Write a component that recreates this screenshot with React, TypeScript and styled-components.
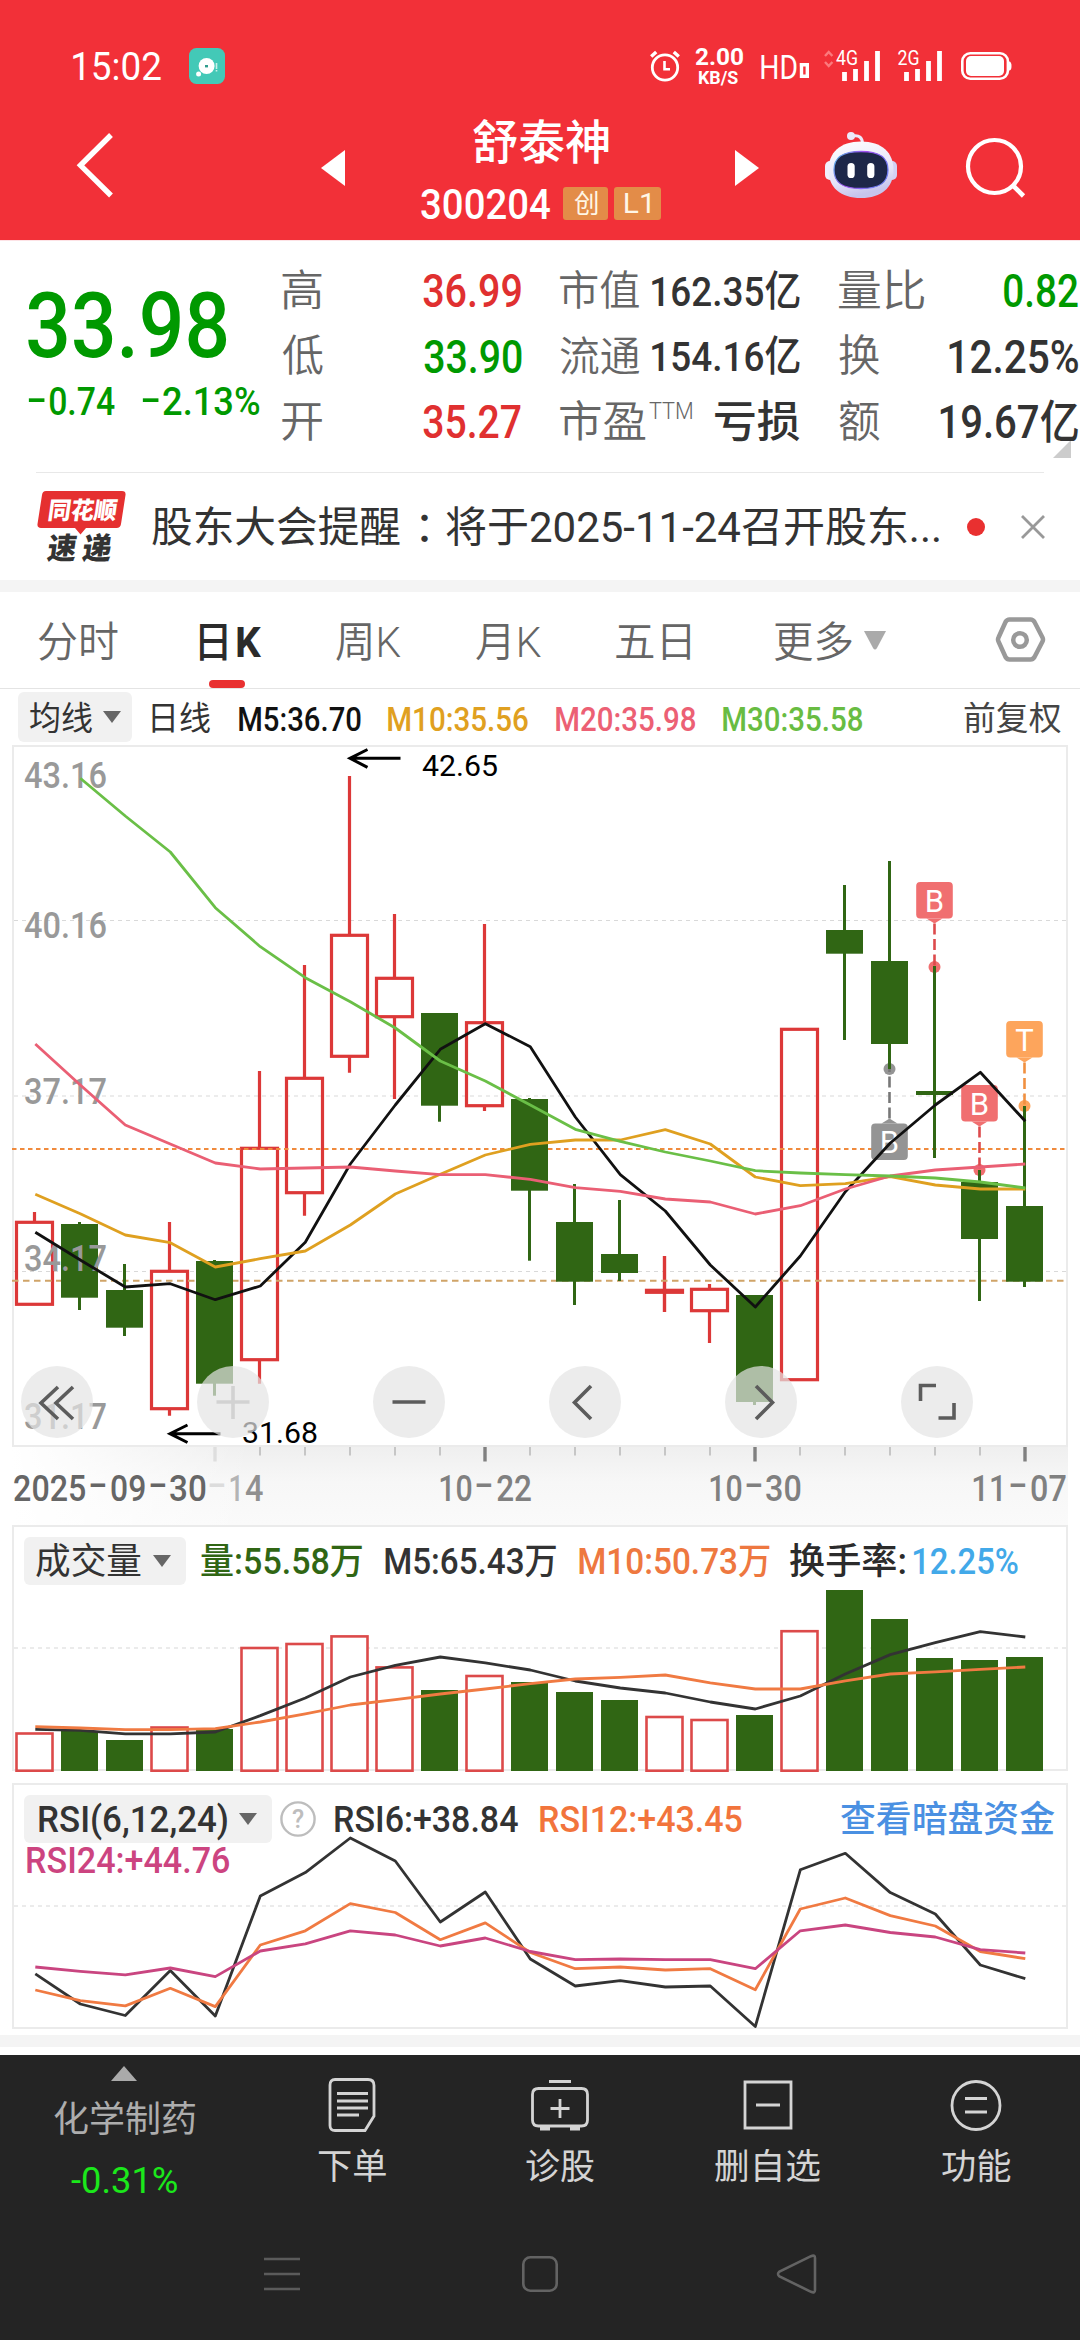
import React, { useLayoutEffect, useRef, useState } from 'react';
import styled, { createGlobalStyle, css } from 'styled-components';

const FONT = `Roboto, 'Noto Sans CJK SC', sans-serif`;

const GlobalStyle = createGlobalStyle`
  *, *::before, *::after { box-sizing: border-box; }
  body { margin: 0; background: #fff; font-family: ${FONT}; }
  svg { display: block; flex: none; overflow: visible; }
`;

/* ---------- Fitted text: condenses a run of text to a given ink width ---------- */

interface TextProps {
  $size: number;
  $weight?: number;
  $color?: string;
  $ml?: number;
  $lift?: number;
  $lh?: number;
}

const FitBox = styled.span<TextProps & { $w: number }>`
  display: inline-block;
  flex: none;
  width: ${p => p.$w}px;
  height: ${p => p.$size * (p.$lh ?? 1.2)}px;
  line-height: ${p => p.$size * (p.$lh ?? 1.2)}px;
  margin-left: ${p => p.$ml ?? 0}px;
  font-size: ${p => p.$size}px;
  font-weight: ${p => p.$weight ?? 500};
  color: ${p => p.$color ?? 'inherit'};
  white-space: pre;
  ${p => p.$lift && css`margin-top: ${-p.$lift}px;`}
`;

const FitInner = styled.span`
  display: inline-block;
  transform-origin: 0 50%;
`;

interface FitProps {
  w: number;
  size: number;
  weight?: number;
  color?: string;
  ml?: number;
  lift?: number;
  drop?: number;
  lh?: number;
  children: string;
}

function Fit({ w, size, weight, color, ml, lift, drop = 1.5, lh, children }: FitProps) {
  const ref = useRef<HTMLSpanElement>(null);
  const [transform, setTransform] = useState('none');
  useLayoutEffect(() => {
    const ctx = document.createElement('canvas').getContext('2d');
    if (!ref.current || !ctx) return;
    const cs = getComputedStyle(ref.current);
    ctx.font = `${cs.fontWeight} ${cs.fontSize} ${cs.fontFamily}`;
    const m = ctx.measureText(children);
    const k = w / (m.actualBoundingBoxLeft + m.actualBoundingBoxRight);
    setTransform(`translate(${m.actualBoundingBoxLeft * k}px, ${drop}px) scaleX(${k})`);
  }, [children, w, drop]);
  return (
    <FitBox $w={w} $size={size} $weight={weight} $color={color} $ml={ml} $lift={lift} $lh={lh}>
      <FitInner ref={ref} style={{ transform }}>{children}</FitInner>
    </FitBox>
  );
}

/* ---------- Header ---------- */

const Page = styled.div`
  width: 1080px;
  height: 2340px;
  display: flex;
  flex-direction: column;
  overflow: hidden;
  background: #fff;
`;

const Header = styled.header`
  height: 241px;
  flex: none;
  background: #f23038;
  color: #fff;
  border-bottom: 1px solid #fde3e6;
`;

const StatusBar = styled.div`
  height: 94px;
  padding: 38px 0 0 73px;
  display: flex;
  align-items: center;
`;

const StatusIcons = styled.div`
  display: flex;
  align-items: center;
  margin-left: 425px;
`;

const Speed = styled.div`
  display: flex;
  flex-direction: column;
  align-items: center;
  margin-left: 15px;
  gap: 1.5px;
`;

const NavRow = styled.div`
  display: flex;
  height: 146px;
`;

const TitleBlock = styled.div`
  width: 240px;
  margin-left: 76px;
  padding-top: 20px;
  display: flex;
  flex-direction: column;
  align-items: center;
`;

const CodeLine = styled.div`
  display: flex;
  align-items: center;
  margin-top: 17px;
  height: 34px;
`;

const Badge = styled.span<{ $w: number; $ml: number }>`
  display: flex;
  align-items: center;
  justify-content: center;
  width: ${p => p.$w}px;
  height: 33px;
  margin-left: ${p => p.$ml}px;
  border-radius: 3px;
  background: #e38c48;
  color: #fff6e6;
`;

function TealIcon() {
  return (
    <svg width="36" height="36" viewBox="0 0 36 36" style={{ marginLeft: 28 }}>
      <rect width="36" height="36" rx="7.5" fill="#43c9b7" />
      <circle cx="17.6" cy="18" r="8" fill="#fff" />
      <rect x="16" y="17" width="3" height="2.4" fill="#2f9c8d" />
      <circle cx="9.6" cy="26" r="2.5" fill="#fff" />
      <path d="M27.5 15v6M27.5 22v1.6" stroke="#c9f0ea" strokeWidth="1.6" />
    </svg>
  );
}

function AlarmIcon() {
  return (
    <svg width="30" height="32" viewBox="0 0 30 32" fill="none" stroke="#fff">
      <circle cx="15" cy="17.5" r="12.7" strokeWidth="2.8" />
      <path d="M14.5 11v8.2h5.5" strokeWidth="2.6" />
      <path d="M1.2 6.5l5-4.5M28.8 6.5l-5-4.5" strokeWidth="3.4" />
    </svg>
  );
}

const Signal4G = () => (
  <svg width="56" height="32" viewBox="824 50 56 32">
    <path d="M825 56l3.7-4 3.700 4M825 62l3.7 4 3.7-4" fill="none" stroke="#fb7a7d" strokeWidth="2.4" />
    <text x="836" y="65" fontSize="20" textLength="22" lengthAdjust="spacingAndGlyphs" fill="#fff">4G</text>
    <path d="M844.5 72v9M855.5 69v12M866.5 61v20M877.5 51v30" stroke="#fff" strokeWidth="4.8" />
  </svg>
);

const Signal2G = () => (
  <svg width="45" height="32" viewBox="898 50 45 32" style={{ marginLeft: 18 }}>
    <text x="897.5" y="65" fontSize="20" textLength="22" lengthAdjust="spacingAndGlyphs" fill="#fff">2G</text>
    <path d="M906.5 72v9M917.5 69v12M928.5 61v20M939.5 51v30" stroke="#fff" strokeWidth="4.8" />
  </svg>
);

const BatteryIcon = () => (
  <svg width="50" height="28" viewBox="0 0 50 28" style={{ marginLeft: 18 }}>
    <rect x="1.3" y="1.3" width="45.6" height="25.4" rx="8" fill="none" stroke="#fff" strokeWidth="2.6" />
    <rect x="5" y="4" width="38" height="20" rx="5" fill="#fff" />
    <path d="M48 9.5q2.5 0 2.5 4.5t-2.5 4.5z" fill="#fff" />
  </svg>
);

const HdIcon = () => (
  <svg width="11" height="15" viewBox="0 0 11 15" style={{ marginLeft: 1.5, marginTop: 9 }}>
    <path d="M1.7 1.7h7.6v11.6H3.5V1.700" fill="none" stroke="#fff" strokeWidth="3.4" />
  </svg>
);

function RobotIcon() {
  return (
    <svg width="74" height="68" viewBox="824 131 74 68">
      <defs>
        <linearGradient id="head" x1="0" y1="0" x2="0.3" y2="1">
          <stop offset="0" stopColor="#fff" />
          <stop offset="0.7" stopColor="#e6e4f8" />
          <stop offset="1" stopColor="#c6c4ec" />
        </linearGradient>
        <linearGradient id="rim" x1="0" y1="0" x2="1" y2="0.4">
          <stop offset="0" stopColor="#4fc0e6" />
          <stop offset="0.5" stopColor="#a24cf0" />
          <stop offset="1" stopColor="#6f7cf4" />
        </linearGradient>
      </defs>
      <path d="M853 136q9.5-1.5 9.5 8" fill="none" stroke="#eceafa" strokeWidth="3" />
      <circle cx="851" cy="136" r="4" fill="#eceafa" />
      <rect x="825" y="161" width="10" height="19" rx="5" fill="#f1effc" />
      <rect x="887" y="161" width="10" height="19" rx="5" fill="#d3d1f4" />
      <path d="M861 141.5c21 0 32.5 11 32.5 28.5s-12 28-32.5 28-32.5-10.5-32.5-28 11.5-28.5 32.5-28.5z" fill="url(#head)" />
      <path d="M861 151.5c19 0 27 6 27 18.5s-8 18.5-27 18.5-27-6-27-18.5 8-18.5 27-18.5z" fill="#1d2748" stroke="url(#rim)" strokeWidth="1.3" />
      <rect x="847.5" y="163" width="7.2" height="15" rx="3.6" fill="#fff" />
      <rect x="867.2" y="163" width="7.2" height="15" rx="3.6" fill="#fff" />
    </svg>
  );
}

function AppHeader() {
  return (
    <Header>
      <StatusBar>
        <Fit w={88} size={39} weight={400} drop={0.5}>15:02</Fit>
        <TealIcon />
        <StatusIcons>
          <AlarmIcon />
          <Speed>
            <Fit w={48} size={24.5} weight={700} lh={0.85} drop={0}>2.00</Fit>
            <Fit w={39.5} size={17.5} weight={700} lh={0.85} drop={0.5}>KB/S</Fit>
          </Speed>
          <Fit w={36} size={34} weight={400} ml={17.5} drop={0.5}>HD</Fit>
          <HdIcon />
          <svg width="15" height="1" />
          <Signal4G />
          <Signal2G />
          <BatteryIcon />
        </StatusIcons>
      </StatusBar>
      <NavRow>
        <svg width="345" height="146" viewBox="0 94 345 146">
          <path d="M111 135L80.5 165.3L111 195.5" fill="none" stroke="#fff" strokeWidth="5.4" />
          <path d="M345 150v36l-24-18z" fill="#fff" />
        </svg>
        <TitleBlock>
          <Fit w={136} size={46.5} weight={500}>舒泰神</Fit>
          <CodeLine>
            <Fit w={129} size={42} weight={500} drop={0.5}>300204</Fit>
            <Badge $w={45} $ml={13}><Fit w={23.5} size={26} weight={400} drop={0.5}>创</Fit></Badge>
            <Badge $w={47.5} $ml={6}><Fit w={25} size={27} weight={400} drop={0}>L1</Fit></Badge>
          </CodeLine>
        </TitleBlock>
        <svg width="90" height="146" viewBox="661 94 90 146">
          <path d="M735 150v36l24-18z" fill="#fff" />
        </svg>
        <svg width="73" height="36" />
        <RobotOffset><RobotIcon /></RobotOffset>
        <svg width="182" height="146" viewBox="898 94 182 146" fill="none" stroke="#fff">
          <circle cx="994.5" cy="166.5" r="26.5" strokeWidth="4.2" />
          <path d="M1013 185.5l10.5 10.5" strokeWidth="4.6" />
        </svg>
      </NavRow>
    </Header>
  );
}

const RobotOffset = styled.div`
  padding-top: 37px;
`;

/* ---------- Quote panel ---------- */

const GREEN = '#009900';
const RED = '#e03030';
const INK = '#333';
const MUTED = '#666';

const Quote = styled.section`
  display: flex;
  height: 232px;
  flex: none;
`;

const PriceCol = styled.div`
  width: 281.5px;
  padding: 28.5px 0 0 27.5px;
`;

const ChangeRow = styled.div`
  display: flex;
  align-items: center;
  height: 46px;
  margin-top: -2px;
`;

const StatCol = styled.div<{ $w: number; $ml?: number }>`
  width: ${p => p.$w}px;
  margin-left: ${p => p.$ml ?? 0}px;
  padding-top: 16px;
`;

const StatRow = styled.div`
  display: flex;
  height: 65.5px;
  align-items: center;
  justify-content: space-between;
`;

const Label = styled.span`
  display: flex;
`;

const ExpandCorner = styled.i`
  width: 0;
  height: 0;
  align-self: flex-end;
  margin: 0 0 15px -25px;
  border-left: 18px solid transparent;
  border-bottom: 18px solid #ccc;
`;

const Divider = styled.hr`
  width: 1008px;
  height: 1px;
  margin: -1px 36px 0;
  border: 0;
  flex: none;
  background: #e8e8e8;
`;

function QuotePanel() {
  return (
    <Quote>
      <PriceCol>
        <Fit w={198.5} size={91.5} color={GREEN} drop={0.5}>33.98</Fit>
        <ChangeRow>
          <Fit w={17} size={39} color={GREEN} lift={5}>-</Fit>
          <Fit w={66} size={39} color={GREEN} ml={4}>0.74</Fit>
          <Fit w={17} size={39} color={GREEN} ml={27.5} lift={5}>-</Fit>
          <Fit w={96} size={39} color={GREEN} ml={4}>2.13%</Fit>
        </ChangeRow>
      </PriceCol>
      <StatCol $w={239.5}>
        <StatRow><Fit w={40} size={43} weight={350} color={MUTED}>高</Fit><Fit w={98} size={46} color={RED}>36.99</Fit></StatRow>
        <StatRow><Fit w={41} size={43} weight={350} color={MUTED}>低</Fit><Fit w={97.5} size={46} color={GREEN}>33.90</Fit></StatRow>
        <StatRow><Fit w={40} size={43} weight={350} color={MUTED}>开</Fit><Fit w={98} size={46} color={RED}>35.27</Fit></StatRow>
      </StatCol>
      <StatCol $w={240} $ml={39}>
        <StatRow>
          <Fit w={79.5} size={41} weight={350} color={MUTED}>市值</Fit>
          <Fit w={148} size={41.5} color={INK}>162.35亿</Fit>
        </StatRow>
        <StatRow>
          <Fit w={79.5} size={41} weight={350} color={MUTED}>流通</Fit>
          <Fit w={148} size={41.5} color={INK}>154.16亿</Fit>
        </StatRow>
        <StatRow>
          <Label>
            <Fit w={85.5} size={43.5} weight={350} color={MUTED}>市盈</Fit>
            <Fit w={43.5} size={23.5} weight={350} color={MUTED} ml={3}>TTM</Fit>
          </Label>
          <Fit w={85} size={43.5} color={INK}>亏损</Fit>
        </StatRow>
      </StatCol>
      <StatCol $w={239.5} $ml={38.5}>
        <StatRow><Fit w={85} size={43.5} weight={350} color={MUTED}>量比</Fit><Fit w={74} size={46} color={GREEN}>0.82</Fit></StatRow>
        <StatRow><Fit w={41} size={43.5} weight={350} color={MUTED}>换</Fit><Fit w={129} size={46} color={INK}>12.25%</Fit></StatRow>
        <StatRow><Fit w={41} size={43.5} weight={350} color={MUTED}>额</Fit><Fit w={138} size={46} color={INK}>19.67亿</Fit></StatRow>
      </StatCol>
      <ExpandCorner />
    </Quote>
  );
}

/* ---------- News strip ---------- */

const News = styled.section`
  display: flex;
  align-items: center;
  height: 107px;
  flex: none;
  padding-left: 37px;
`;

const Headline = styled.p`
  display: flex;
  align-items: center;
  margin: 0 0 0 25.5px;
  font-size: 42px;
  line-height: 50px;
  color: ${INK};
  white-space: nowrap;
`;

const WideColon = styled.span`
  font-family: 'Noto Sans CJK TC', sans-serif;
  line-height: 50px;
  height: 50px;
  width: 42px;
`;

const UnreadDot = styled.i`
  width: 18px;
  height: 18px;
  margin-left: 28px;
  border-radius: 50%;
  background: #e93030;
`;

const Band = styled.div`
  height: 12px;
  flex: none;
  background: #f4f4f4;
`;

function NewsStrip() {
  return (
    <News>
      <svg width="89" height="72" viewBox="0 0 89 72">
        <path d="M9 0H85q4 0 3.5 4L84 33q-.6 4-4.5 4H49l-5.5 6.5L38 37H4q-4 0-3.5-4L5 4q.5-4 4-4z" fill="#e53030" />
        <g transform="skewX(-8)" fontWeight="900">
          <text x="14" y="28.5" fontSize="24" textLength="69" lengthAdjust="spacingAndGlyphs" fill="#fff">同花顺</text>
          <text x="19" y="68.5" fontSize="30" textLength="29" lengthAdjust="spacingAndGlyphs" fill="#333">速</text>
          <text x="54" y="68.5" fontSize="30" textLength="29" lengthAdjust="spacingAndGlyphs" fill="#333">递</text>
        </g>
      </svg>
      <Headline>
        <Fit w={248} size={42} weight={400}>股东大会提醒</Fit>
        <svg width="4" height="1" />
        <WideColon>：</WideColon>
        <Fit w={493} size={42} weight={400}>将于2025-11-24召开股东...</Fit>
      </Headline>
      <UnreadDot />
      <svg width="24" height="24" viewBox="0 0 24 24" style={{ marginLeft: 36 }}>
        <path d="M1 1l22 22M23 1L1 23" stroke="#999" strokeWidth="2.8" />
      </svg>
    </News>
  );
}

/* ---------- Period tabs ---------- */

const Tabs = styled.nav`
  display: flex;
  height: 97px;
  flex: none;
  border-bottom: 1px solid #e4e4e4;
  padding-left: 38px;
`;

const Tab = styled.div<{ $ml?: number; $active?: boolean }>`
  display: flex;
  flex-direction: column;
  align-items: center;
  padding-top: 24.5px;
  margin-left: ${p => p.$ml ?? 0}px;
  color: ${p => (p.$active ? '#2b2b2b' : MUTED)};
  ${p => p.$active && css`
    &::after {
      content: '';
      width: 36px;
      height: 9px;
      margin: 12px 8px 0 0;
      border-radius: 4.5px;
      background: #e93030;
    }
  `}
`;

function PeriodTabs() {
  return (
    <Tabs>
      <Tab><Fit w={80} size={42} weight={350} drop={1}>分时</Fit></Tab>
      <Tab $ml={82} $active>
        <Label>
          <Fit w={27} size={42} weight={500} drop={1}>日</Fit>
          <Fit w={24.5} size={43} weight={700} ml={9.5} drop={0}>K</Fit>
        </Label>
      </Tab>
      <Tab $ml={75}><Fit w={64.5} size={42} weight={350} drop={1}>周K</Fit></Tab>
      <Tab $ml={75.5}><Fit w={65} size={42} weight={350} drop={1}>月K</Fit></Tab>
      <Tab $ml={75}><Fit w={74} size={42} weight={350} drop={1}>五日</Fit></Tab>
      <Tab $ml={85}><Fit w={77} size={42} weight={350} drop={1}>更多</Fit></Tab>
      <svg width="194" height="96" viewBox="852 592 194 96">
        <path d="M864 631h22l-9 17q-2 3-4 0z" fill="#aaa" />
        <path d="M1009.5 619.5h21q2.5 0 4 2.5l8 15.5q1 2 0 4l-8 15.5q-1.5 2.5-4 2.5h-21q-2.5 0-4-2.5l-7-15.5q-1-2 0-4l7-15.500q1.5-2.5 4-2.5z" fill="none" stroke="#999" strokeWidth="4.5" />
        <circle cx="1020" cy="640" r="6.8" fill="none" stroke="#999" strokeWidth="4.5" />
      </svg>
    </Tabs>
  );
}

/* ---------- Indicator legend pieces ---------- */

const Legend = styled.div<{ $h: number; $top?: number }>`
  display: flex;
  align-items: center;
  height: ${p => p.$h}px;
  margin-top: ${p => p.$top ?? 0}px;
  flex: none;
`;

const Picker = styled.button<{ $w: number; $h: number; $ml: number }>`
  display: flex;
  align-items: center;
  flex: none;
  width: ${p => p.$w}px;
  height: ${p => p.$h}px;
  margin: 0 0 0 ${p => p.$ml}px;
  padding: 0 0 0 12px;
  border: 0;
  border-radius: 6px;
  background: #f1f1f1;
  font-family: inherit;
  color: ${INK};
`;

const Caret = styled.i<{ $ml: number }>`
  margin-left: ${p => p.$ml}px;
  border: 9px solid transparent;
  border-top: 12px solid #666;
  border-bottom: 0;
`;

/* ---------- Candlestick chart ---------- */

type Candle = [up: 0 | 1, top: number, bottom: number, high: number, low: number];

const CANDLES: Candle[] = [
  [1, 1222.3, 1304.3, 1212, 1304],
  [0, 1224, 1297.7, 1222, 1310],
  [0, 1290, 1327.7, 1264, 1336],
  [1, 1271.3, 1408.7, 1222, 1415.7],
  [0, 1261, 1383.7, 1260, 1395.7],
  [1, 1148.3, 1359.7, 1071, 1383.7],
  [1, 1078.3, 1192.7, 965, 1215.7],
  [1, 935.3, 1056.3, 776, 1072.7],
  [1, 978.3, 1016.7, 914, 1099],
  [0, 1013, 1105.7, 1013, 1121.7],
  [1, 1022.7, 1105.7, 924, 1111],
  [0, 1099, 1190.7, 1098, 1260.7],
  [0, 1222, 1281.7, 1184, 1305],
  [0, 1254, 1273, 1200, 1281],
  [1, 1290.3, 1292.3, 1256, 1312],
  [1, 1289.3, 1310.7, 1284, 1343],
  [0, 1295, 1402, 1295, 1405],
  [1, 1029.3, 1379.7, 1029.3, 1379.7],
  [0, 930, 953.7, 885, 1040],
  [0, 961, 1044, 861, 1069],
  [0, 1091, 1095, 966, 1158],
  [0, 1182, 1239, 1170, 1301],
  [0, 1206, 1281.7, 1106, 1287],
];

const MA5 = [1232.3, 1260, 1287, 1283.7, 1299.7, 1286, 1242.3, 1164, 1105, 1049.3, 1023.7, 1046.7, 1117, 1174.7, 1211, 1265, 1307, 1256, 1191.7, 1143, 1105, 1072.3, 1121.3];
const MA10 = [1194.3, 1213.7, 1235, 1242.7, 1267, 1258.7, 1251, 1225, 1194, 1174.3, 1155, 1144.3, 1140, 1140, 1129.7, 1144, 1177, 1185.7, 1183.7, 1176.7, 1185, 1189, 1189];
const MA20 = [1044, 1085, 1125, 1144, 1163, 1169, 1168, 1167, 1171, 1174.7, 1174.7, 1179.3, 1187.7, 1191.3, 1199, 1202, 1214, 1205.7, 1189, 1176, 1170, 1167, 1164];
const MA30 = [778.3, 816, 852, 907.7, 946.7, 977.7, 1001.7, 1028, 1061, 1081, 1105, 1129.3, 1141.3, 1152, 1161, 1170.7, 1173, 1174.7, 1176, 1178, 1182, 1188];

const UP = '#dc3838';
const DOWN = '#306614';
const cx = (i: number) => 34.5 + 45 * i;
const points = (ys: number[], from = 0) => ys.map((y, i) => `${cx(i + from) + 0.8},${y}`).join(' ');

const Line = ({ ys, from = 0, color, width = 2.8 }: { ys: number[]; from?: number; color: string; width?: number }) => (
  <polyline points={points(ys, from)} fill="none" stroke={color} strokeWidth={width} strokeLinejoin="round" />
);

interface MarkerProps { i: number; box: number; dot: number; letter: string; fill: string; line: string; below?: boolean }

function Marker({ i, box, dot, letter, fill, line, below }: MarkerProps) {
  const x = cx(i);
  const edge = below ? box : box + 36.5;
  const tip = below ? edge - 5 : edge + 5;
  return (
    <g>
      <circle cx={x} cy={dot} r="6" fill={fill} />
      <path d={`M${x} ${tip}V${dot}`} stroke={line} strokeWidth="2.6" strokeDasharray="11 4.5" />
      <rect x={x - 18.3} y={box} width="36.6" height="36.5" rx="4" fill={fill} />
      <path d={`M${x - 8} ${edge}h16L${x} ${tip}z`} fill={fill} />
      <text x={x} y={box + 29.5} fontSize="31" textAnchor="middle" fill="#fff">{letter}</text>
    </g>
  );
}

const Frame = styled.section<{ $h: number; $mt?: number }>`
  display: grid;
  flex: none;
  width: 1056px;
  height: ${p => p.$h}px;
  margin: ${p => p.$mt ?? 0}px 12px 0;
  border: 2px solid #ebebeb;
  & > * { grid-area: 1 / 1; }
`;

const ControlRow = styled.div`
  display: flex;
  align-self: end;
  gap: 104px;
  padding: 0 0 7px 7px;
  z-index: 1;
`;

const RoundButton = styled.button<{ $dim?: boolean }>`
  width: 72px;
  height: 72px;
  padding: 0;
  border: 0;
  border-radius: 50%;
  background: rgba(228, 228, 228, 0.7);
  color: ${p => (p.$dim ? '#d2d2d2' : '#5c5c5c')};
`;

const CONTROLS = [
  { d: 'M54 21L37 37L54 53M69 21L52 37L69 53', dx: -17 },
  { d: 'M36 20v33M19.5 36h33', dim: true },
  { d: 'M19.5 36h33' },
  { d: 'M42 20L25.5 36.5L42 53' },
  { d: 'M31 20L47.5 36.5L31 53' },
  { d: 'M19.5 35V19.5H35M37.5 52H53V37' },
];

const LABELS = [
  ['43.16', 788.3], ['40.16', 938.3], ['37.17', 1104.3], ['34.17', 1271.3], ['31.17', 1429],
] as const;

function PriceChart() {
  return (
    <Frame $h={702}>
      <svg width="1052" height="698" viewBox="14 747 1052 698">
        <path d="M14 920.5H1066" stroke="#d9d9d9" strokeDasharray="4 4" />
        <path d="M14 1096H1066" stroke="#ececec" strokeWidth="2" strokeDasharray="4 4" />
        <path d="M14 1271.5H1066" stroke="#d9d9d9" strokeDasharray="4 4" />
        {CANDLES.map(([up, top, bottom, high, low], i) => (up ? (
          <g key={i} stroke={UP} fill="none">
            <rect x={cx(i) - 18} y={top} width="36" height={bottom - top} strokeWidth="3.2" />
            <path d={`M${cx(i)} ${high}V${top}M${cx(i)} ${bottom}V${low}`} strokeWidth="3.2" />
            {bottom - top < 3 && <path d={`M${cx(i)} ${high}V${low}`} strokeWidth="3.2" />}
          </g>
        ) : null))}
        <path d="M12 1149H1066" stroke="#f08a3c" strokeWidth="2" strokeDasharray="4.5 3.5" />
        <path d="M12 1280.7H1066" stroke="#d0a468" strokeWidth="2" strokeDasharray="6.5 4.5" />
        <Marker i={20} box={882} dot={967} letter="B" fill="#f06f70" line="#dd4a4c" />
        <Marker i={19} box={1123.5} dot={1069} letter="B" fill="#949494" line="#777" below />
        <Marker i={21} box={1085} dot={1170} letter="B" fill="#f06f70" line="#dd4a4c" />
        <Marker i={22} box={1021} dot={1106} letter="T" fill="#fda55c" line="#f09040" />
        {CANDLES.map(([up, top, bottom, high, low], i) => (up ? null : (
          <g key={i} fill={DOWN}>
            <rect x={cx(i) - 18.5} y={top} width="37" height={bottom - top} />
            <rect x={cx(i) - 1.5} y={high} width="3" height={low - high} />
          </g>
        )))}
        {LABELS.map(([label, y]) => (
          <text key={label} x="24" y={y} fontSize="36" fontWeight="500" textLength="83" lengthAdjust="spacingAndGlyphs" fill="#999">{label}</text>
        ))}
        <Line ys={MA5} color="#111" />
        <Line ys={MA10} color="#dfa020" />
        <Line ys={MA20} color="#ea5f74" />
        <Line ys={MA30} from={1} color="#6abf47" />
        <g fill="none" stroke="#000" strokeWidth="3">
          <path d="M400.5 758.3H350M367.5 749.5L350 758.3L367.5 767.3" />
          <path d="M220.5 1433.7H170M187.5 1425L170 1433.7L187.5 1442.5" />
        </g>
        <text x="422" y="776" fontSize="29.5" textLength="76" lengthAdjust="spacingAndGlyphs">42.65</text>
        <text x="242" y="1442.7" fontSize="29.5" textLength="76" lengthAdjust="spacingAndGlyphs">31.68</text>
      </svg>
      <ControlRow>
        {CONTROLS.map(({ d, dim, dx }) => (
          <RoundButton key={d} $dim={dim}>
            <svg width="72" height="72" viewBox="0 0 72 72">
              <path d={d} transform={`translate(${dx ?? 0} 0)`} fill="none" stroke="currentColor" strokeWidth="3.6" />
            </svg>
          </RoundButton>
        ))}
      </ControlRow>
    </Frame>
  );
}

const Axis = styled.div`
  display: grid;
  height: 78px;
  flex: none;
  margin: 0 12px;
  background: linear-gradient(90deg, #fff 0, rgba(255, 255, 255, 0) 240px),
    linear-gradient(#efefef, #f7f7f7 45%, #fafafa);
  & > * { grid-area: 1 / 1; }
`;

const AxisLabels = styled.div`
  display: flex;
  align-items: center;
  height: 82px;
  padding-left: 2px;
  color: #808080;
`;

const DateLabel = styled.span<{ $ml?: number; $strong?: boolean }>`
  display: flex;
  flex: none;
  margin-left: ${p => p.$ml ?? 0}px;
  ${p => p.$strong && css`color: #666;`}
`;

const DASH = { w: 15.5, size: 36, lift: 4 };

function DateAxis() {
  return (
    <Axis>
      <svg width="1056" height="20" viewBox="12 1447 1056 20">
        {Array.from({ length: 19 }, (_, k) => k + 4).map(i => {
          const major = i % 6 === 4;
          return (
            <path
              key={i}
              d={`M${cx(i) + 0.5} 1447v${major ? 14.5 : 8.5}`}
              stroke={i === 4 ? '#dedede' : major ? '#808080' : '#c6c6c6'}
              strokeWidth={major ? 3.4 : 2}
            />
          );
        })}
      </svg>
      <AxisLabels>
        <DateLabel $strong>
          <Fit w={71} size={36}>2025</Fit>
          <Fit {...DASH} ml={5}>-</Fit>
          <Fit w={34} size={36} ml={5}>09</Fit>
          <Fit {...DASH} ml={5}>-</Fit>
          <Fit w={35.5} size={36} ml={5}>30</Fit>
        </DateLabel>
        <DateLabel $ml={3}>
          <Fit {...DASH} color="#dcdcdc">-</Fit>
          <Fit w={9} size={36} ml={6} color="#b4b4b4">1</Fit>
          <Fit w={18} size={36} ml={6} color="#909090">4</Fit>
        </DateLabel>
        <DateLabel $ml={177}>
          <Fit w={31.5} size={36}>10</Fit><Fit {...DASH} ml={4.5}>-</Fit><Fit w={34.5} size={36} ml={5}>22</Fit>
        </DateLabel>
        <DateLabel $ml={178.5}>
          <Fit w={31.5} size={36}>10</Fit><Fit {...DASH} ml={4.5}>-</Fit><Fit w={34.5} size={36} ml={5}>30</Fit>
        </DateLabel>
        <DateLabel $ml={172.5}>
          <Fit w={28} size={36}>11</Fit><Fit {...DASH} ml={9}>-</Fit><Fit w={34.5} size={36} ml={5}>07</Fit>
        </DateLabel>
      </AxisLabels>
    </Axis>
  );
}

/* ---------- Volume ---------- */

const VOLUME_TOPS = [208.5, 206, 215, 202.5, 204, 123, 119, 111.4, 142.4, 165, 151, 157, 167, 175, 192, 195, 190, 106.2, 65, 94, 133, 135, 132];
const VOL5 = [204.4, 205.4, 208.8, 208.8, 207, 190.6, 173, 152, 140.3, 132, 137.9, 145, 156, 163, 168, 177, 184, 171, 149, 129.6, 117.6, 106.6, 112];
const VOL10 = [201.6, 203, 204.7, 204.7, 203.7, 197, 188.9, 180, 174.7, 169, 164, 158.6, 154, 152.4, 150, 157.9, 164, 164, 155.8, 149, 146.8, 144.4, 142];

const LegendLayer = styled.div`
  z-index: 1;
`;

function VolumeChart() {
  return (
    <Frame $h={246}>
      <svg width="1052" height="242" viewBox="14 2 1052 242">
        <path d="M14 123H1066" stroke="#ebebeb" strokeWidth="2" strokeDasharray="4 4" />
        {VOLUME_TOPS.map((top, i) => (CANDLES[i][0] ? (
          <rect key={i} x={cx(i) - 18} y={top} width="36" height={245.7 - top} fill="#fff" stroke="#dc4a4a" strokeWidth="2.6" />
        ) : (
          <rect key={i} x={cx(i) - 18.5} y={top} width="37" height={246 - top} fill={DOWN} />
        )))}
        <Line ys={VOL5} color="#333" />
        <Line ys={VOL10} color="#f07a42" />
      </svg>
      <LegendLayer>
        <Legend $h={48} $top={10}>
          <Picker $w={162} $h={48} $ml={10}><Fit w={105} size={36} weight={400}>成交量</Fit><Caret $ml={11.5} /></Picker>
          <Fit w={161} size={36} ml={14.5} color={DOWN}>量:55.58万</Fit>
          <Fit w={171} size={36} ml={23} color={INK}>M5:65.43万</Fit>
          <Fit w={190.5} size={36} ml={23} color="#ee7840">M10:50.73万</Fit>
          <Fit w={115.5} size={36} ml={21} color="#2b2b2b">换手率:</Fit>
          <Fit w={104.5} size={36} ml={7.5} color="#42a9e9">12.25%</Fit>
        </Legend>
      </LegendLayer>
    </Frame>
  );
}

/* ---------- RSI ---------- */

const RSI6 = [190.8, 221, 232.5, 187.4, 233, 113, 89.6, 55, 78, 139, 109, 176, 203, 197.7, 204, 203, 243.5, 86.8, 70.3, 109.6, 131, 182, 195.7];
const RSI12 = [207, 217.7, 222.9, 205.3, 223.6, 162, 147.8, 120.6, 129.5, 156.7, 139.9, 169.5, 185.7, 184, 187, 185.7, 206.7, 126, 115, 132.6, 143, 168.5, 175.7];
const RSI24 = [184, 188.4, 191.9, 185, 193.6, 168, 160.9, 147.8, 152, 163, 155, 168.5, 176.7, 176, 176.7, 176.7, 185.7, 147.8, 142, 149.5, 154, 166.7, 170];

function RsiChart() {
  return (
    <Frame $h={246} $mt={12}>
      <svg width="1052" height="242" viewBox="14 2 1052 242">
        <path d="M14 123H1066" stroke="#ebebeb" strokeWidth="2" strokeDasharray="4 4" />
        <Line ys={RSI6} color="#333" />
        <Line ys={RSI12} color="#f07a42" />
        <Line ys={RSI24} color="#c94580" />
      </svg>
      <LegendLayer>
        <Legend $h={48} $top={10}>
          <Picker $w={248} $h={48} $ml={10}><Fit w={188.5} size={36} ml={2.5}>{'RSI(6,12,24)'}</Fit><Caret $ml={11.5} /></Picker>
          <svg width="36" height="36" viewBox="0 0 36 36" style={{ marginLeft: 8 }}>
            <circle cx="18" cy="18" r="16.6" fill="none" stroke="#bdbdbd" strokeWidth="2.4" />
            <text x="18" y="27" fontSize="25" fontWeight="500" textAnchor="middle" fill="#bdbdbd">?</text>
          </svg>
          <Fit w={183} size={36} ml={19} color={INK}>RSI6:+38.84</Fit>
          <Fit w={201.5} size={36} ml={22} color="#f2743c">RSI12:+43.45</Fit>
          <Fit w={214} size={36} ml={99.5} color="#4a90e2">查看暗盘资金</Fit>
        </Legend>
        <Legend $h={34} $top={0}>
          <Fit w={202} size={36} ml={12.5} color="#cc4480">RSI24:+44.76</Fit>
        </Legend>
      </LegendLayer>
    </Frame>
  );
}

/* ---------- Bottom bars ---------- */

const Gray = styled(Band)`
  margin: 6px 0 8px;
`;

const Bottom = styled.footer`
  flex: 1;
  background: #242424;
  color: #d4d4d4;
`;

const ActionBar = styled.div`
  display: grid;
  grid-template-columns: 248px repeat(4, 208px);
  height: 152px;
`;

const Sector = styled.div`
  display: flex;
  flex-direction: column;
  align-items: center;
  padding-top: 11px;
  gap: 16px;
  color: #adadad;
  & > :last-child { margin-top: 1.5px; }
`;

const Action = styled.div`
  display: flex;
  flex-direction: column;
  align-items: center;
  padding-top: 22px;
  gap: 10.5px;
`;

const SystemNav = styled.div`
  display: flex;
  align-items: center;
  height: 134px;
  gap: 222px;
  padding-left: 264px;
`;

const ACTIONS = [
  { name: '下单', w: 68, icon: <path d="M8 2.5h33q6 0 6 6V39L38 53.5H8q-5 0-5-5V8q0-5.5 5-5.5zM10 16.5h31M10 24h31M10 31h31M10 38h22" /> },
  { name: '诊股', w: 68.5, icon: <path d="M3.5 11.5H46.5q6 0 6 6V43q0 6-6 6H3.5q-6 0-6-6V17.5q0-6 6-6zM14 4.5h22M25 22v19M15.5 31.5h19M5 52h10M35 52h10" /> },
  { name: '删自选', w: 105.5, icon: <path d="M2 5h46v46H2zM13 28h24" /> },
  { name: '功能', w: 69, icon: <path d="M25 4.5a24 24 0 1 1 0 48a24 24 0 1 1 0-48zM14 21.5h22M14 35h22" /> },
];

function BottomBars() {
  return (
    <Bottom>
      <ActionBar>
        <Sector>
          <svg width="26" height="15" viewBox="0 0 26 15"><path d="M13 0l13 15H0z" fill="#aaa" /></svg>
          <Fit w={141} size={36} weight={400}>化学制药</Fit>
          <Fit w={106} size={36} weight={400} color="#1be81b">-0.31%</Fit>
        </Sector>
        {ACTIONS.map(a => (
          <Action key={a.name}>
            <svg width="50" height="56" viewBox="0 0 50 56" fill="none" stroke="currentColor" strokeWidth="2.8">{a.icon}</svg>
            <Fit w={a.w} size={35.5} weight={400}>{a.name}</Fit>
          </Action>
        ))}
      </ActionBar>
      <SystemNav>
        <svg width="36" height="36" viewBox="0 0 36 36"><path d="M0 3h36M0 18h36M0 33h36" stroke="#5b5b5b" strokeWidth="2.6" /></svg>
        <svg width="36" height="36" viewBox="0 0 36 36"><rect x="1.3" y="1.3" width="33.4" height="33.4" rx="7" fill="none" stroke="#636363" strokeWidth="2.6" /></svg>
        <svg width="36" height="40" viewBox="0 0 36 40"><path d="M31 2.2Q35 .5 35 4V36Q35 39.5 31 37.8L-.5 22.5Q-3.5 20 -.5 17.5z" fill="none" stroke="#636363" strokeWidth="2.6" /></svg>
      </SystemNav>
    </Bottom>
  );
}

export default function App() {
  return (
    <Page>
      <GlobalStyle />
      <AppHeader />
      <QuotePanel />
      <Divider />
      <NewsStrip />
      <Band />
      <PeriodTabs />
      <Legend $h={56}>
        <Picker $w={114} $h={50} $ml={18}><Fit w={62.5} size={32.5} weight={400} drop={2}>均线</Fit><Caret $ml={10} /></Picker>
        <Fit w={58.5} size={32.5} weight={400} ml={19.5} color={INK} drop={2}>日线</Fit>
        <Fit w={122} size={33.5} ml={28.5} color="#111" drop={2.5}>M5:36.70</Fit>
        <Fit w={140} size={33.5} ml={27.5} color="#e0a020" drop={2.5}>M10:35.56</Fit>
        <Fit w={139.5} size={33.5} ml={27.5} color="#ec6074" drop={2.5}>M20:35.98</Fit>
        <Fit w={139.5} size={33.5} ml={27.5} color="#68bc42" drop={2.5}>M30:35.58</Fit>
        <Fit w={97} size={32.5} weight={400} ml={102} color="#444" drop={2}>前复权</Fit>
      </Legend>
      <PriceChart />
      <DateAxis />
      <VolumeChart />
      <RsiChart />
      <Gray />
      <BottomBars />
    </Page>
  );
}
